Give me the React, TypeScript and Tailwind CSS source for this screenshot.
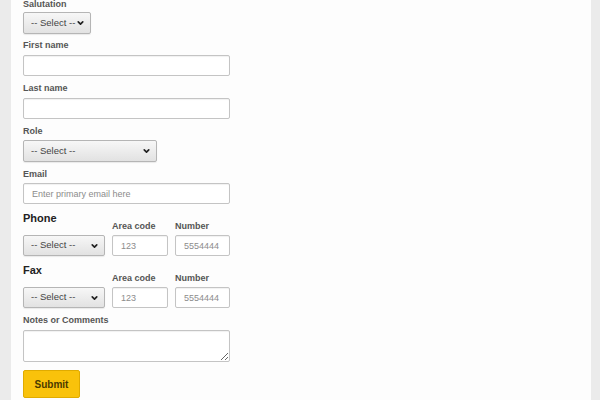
import { ChevronDown } from "lucide-react";

const font = { fontFamily: '"Liberation Sans", Arial, sans-serif' };

function Label({ children, className = "" }: { children: React.ReactNode; className?: string }) {
  return (
    <label className={`block h-[11px] text-[9px] leading-[11px] font-bold text-[#555] ${className}`}>
      {children}
    </label>
  );
}

function Select({ className }: { className: string }) {
  return (
    <div className={`relative ${className}`}>
      <select className="block h-full w-full appearance-none rounded-[2px] border border-[#b5b5b5] bg-gradient-to-b from-[#f7f7f7] to-[#e2e2e2] pl-[7px] text-[9.5px] text-[#444] shadow-[0_1px_1px_rgba(0,0,0,0.08)] outline-none">
        <option>-- Select --</option>
      </select>
      <ChevronDown
        className="pointer-events-none absolute right-[6px] top-1/2 h-[9px] w-[9px] -translate-y-1/2 text-[#222]"
        strokeWidth={4.5}
      />
    </div>
  );
}

function TextInput({ className, placeholder }: { className: string; placeholder?: string }) {
  return (
    <input
      className={`block rounded-[2px] border border-[#c4c4c4] bg-white px-[8px] text-[9px] text-[#333] placeholder:text-[#8c8c8c] shadow-[inset_0_1px_1px_rgba(0,0,0,0.06)] outline-none ${className}`}
      placeholder={placeholder}
    />
  );
}

function PhoneRow({ title }: { title: string }) {
  return (
    <div className="mt-[8px]">
      <div className="flex h-[19px] items-start">
        <div className="w-[89px] text-[11px] leading-[12px] font-bold text-[#222]">{title}</div>
        <div className="w-[63px] pt-[9px]">
          <Label>Area code</Label>
        </div>
        <div className="pt-[9px]">
          <Label>Number</Label>
        </div>
      </div>
      <div className="mt-[4px] flex gap-[7px]">
        <Select className="h-[21px] w-[82px]" />
        <TextInput className="h-[21px] w-[56px]" placeholder="123" />
        <TextInput className="h-[21px] w-[55px]" placeholder="5554444" />
      </div>
    </div>
  );
}

export default function App() {
  return (
    <div className="flex h-[400px] w-[600px] overflow-hidden bg-[#ebebeb]" style={font}>
      <div className="ml-[11px] h-full w-[580px] bg-[#fdfdfd] pl-[12px]">
        <div className="flex flex-col">
          <Label className="-mt-[1px]">Salutation</Label>
          <Select className="mt-[2px] h-[22px] w-[68px]" />

          <Label className="mt-[6px]">First name</Label>
          <TextInput className="mt-[4px] h-[21px] w-[207px]" />

          <Label className="mt-[7px]">Last name</Label>
          <TextInput className="mt-[4px] h-[21px] w-[207px]" />

          <Label className="mt-[7px]">Role</Label>
          <Select className="mt-[3px] h-[22px] w-[134px]" />

          <Label className="mt-[7px]">Email</Label>
          <TextInput className="mt-[3px] h-[21px] w-[207px]" placeholder="Enter primary email here" />

          <PhoneRow title="Phone" />
          <PhoneRow title="Fax" />

          <Label className="mt-[7px]">Notes or Comments</Label>
          <textarea className="mt-[4px] block h-[32px] w-[207px] rounded-[2px] border border-[#c4c4c4] bg-white shadow-[inset_0_1px_1px_rgba(0,0,0,0.06)] outline-none" />

          <button className="mt-[8px] h-[28px] w-[57px] rounded-[2px] border border-[#e0ab00] bg-[#f9c20b] text-[10px] font-bold text-[#4a3a00]">
            Submit
          </button>
        </div>
      </div>
    </div>
  );
}
